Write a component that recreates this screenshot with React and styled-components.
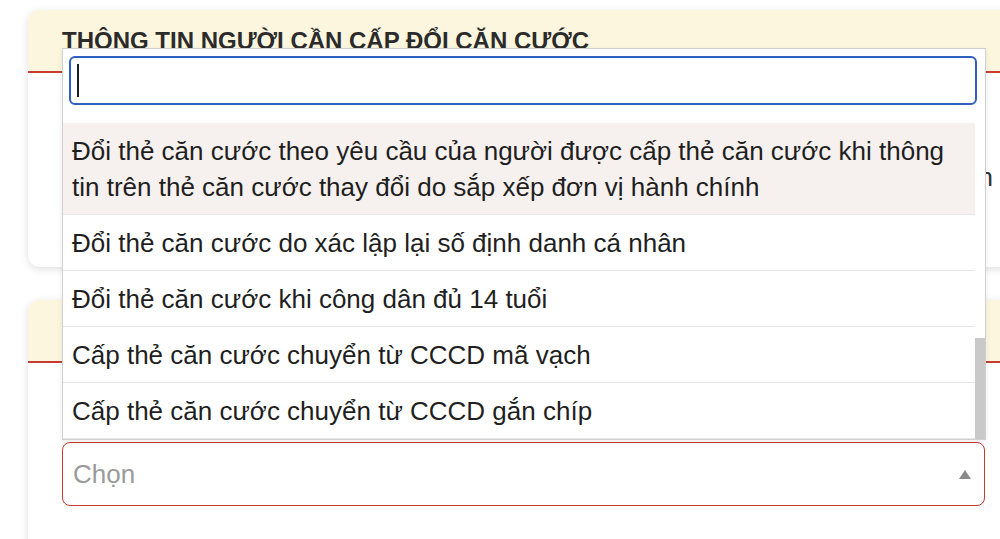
import React, { useLayoutEffect, useRef, useState } from "react";
import styled, { createGlobalStyle } from "styled-components";

const GlobalStyle = createGlobalStyle`
  html, body {
    margin: 0;
    padding: 0;
    overflow: hidden;
    background: #ffffff;
    font-family: "Liberation Sans", Arial, "Noto Sans", sans-serif;
    color: #222222;
  }
`;

const Page = styled.div`
  display: flex;
  flex-direction: column;
  gap: 33px;
  padding: 10px 0 0 28px;
  width: 991px;
`;

const Card = styled.section`
  background: #ffffff;
  border-radius: 12px;
  box-shadow: 0 2px 8px rgba(0, 0, 0, 0.13);
`;

const CardHeader = styled.div`
  background: #fdf6df;
  border-radius: 12px 12px 0 0;
  border-bottom: 2px solid #c8392e;
  padding: 17px 34px 16px;
`;

const CardTitle = styled.h2`
  margin: 0;
  font-size: 24px;
  line-height: 28px;
  font-weight: 700;
  text-transform: uppercase;
  color: #2b2b2b;
  white-space: nowrap;
`;

const CardBody = styled.div`
  display: flex;
  flex-direction: column;
  gap: 14px;
  height: ${(p) => p.$height}px;
  padding: ${(p) => p.$padTop}px 26px 0 34px;
  box-sizing: border-box;
`;

const FieldLabel = styled.label`
  font-size: 22px;
  line-height: 32px;
  color: #333333;
`;

const ValueRow = styled.div`
  display: flex;
  justify-content: space-between;
  font-size: 26px;
  line-height: 36px;
  color: #333333;
`;

const SelectWrap = styled.div`
  position: relative;
  width: 923px;
`;

const SelectBox = styled.div`
  display: flex;
  align-items: center;
  justify-content: space-between;
  height: 64px;
  box-sizing: border-box;
  padding: 0 13px 0 10px;
  border: 1.5px solid #c8392e;
  border-radius: 8px;
  background: #ffffff;
`;

const Placeholder = styled.span`
  font-size: 26px;
  color: #9a9a9a;
`;

const Arrow = styled.span`
  width: 0;
  height: 0;
  border-left: 6px solid transparent;
  border-right: 6px solid transparent;
  border-bottom: 9px solid #8a8a8a;
`;

const Dropdown = styled.div`
  position: absolute;
  left: 0;
  right: -1px;
  bottom: calc(100% + 2px);
  display: flex;
  flex-direction: column;
  background: #ffffff;
  border: 1px solid #cfcfcf;
  box-shadow: 0 2px 6px rgba(0, 0, 0, 0.08);
  z-index: 10;
`;

const SearchArea = styled.div`
  position: relative;
  padding: 7px 8px 18px 6px;
`;

const SearchInput = styled.input`
  display: block;
  width: 100%;
  height: 49px;
  box-sizing: border-box;
  border: 2px solid #2f5fc0;
  border-radius: 6px;
  padding: 0 6px;
  font-family: inherit;
  font-size: 26px;
  color: #222222;
  outline: none;
`;

const Caret = styled.span`
  position: absolute;
  left: 14px;
  top: 15px;
  width: 2px;
  height: 33px;
  background: #1e1e1e;
`;

const ListFrame = styled.div`
  display: flex;
  height: 316px;
`;

const OptionList = styled.ul`
  flex: 1;
  list-style: none;
  margin: 0;
  padding: 0;
  overflow-y: auto;
  scrollbar-width: none;

  &::-webkit-scrollbar {
    display: none;
  }
`;

const ScrollTrack = styled.div`
  position: relative;
  width: 10px;
  background: #ffffff;
`;

const ScrollThumb = styled.div`
  position: absolute;
  left: 0;
  right: 0;
  background: #c9c9c9;
`;

const Option = styled.li`
  padding: 10px 12px 9px 9px;
  font-size: 26px;
  line-height: 36px;
  color: #1f1f1f;
  border-bottom: 1px solid #e6e6e6;
  background: ${(p) => (p.$active ? "#f6f1ee" : "#ffffff")};
`;

const options = [
  "Cấp thẻ căn cước cho người từ đủ 14 tuổi trở lên",
  "Cấp thẻ căn cước cho người dưới 14 tuổi",
  "Đổi thẻ căn cước khi công dân đủ 25 tuổi",
  "Đổi thẻ căn cước khi công dân đủ 40 tuổi",
  "Đổi thẻ căn cước khi công dân đủ 60 tuổi",
  "Đổi thẻ căn cước do bị hư hỏng không sử dụng được",
  "Đổi thẻ căn cước do thay đổi thông tin nhân thân",
  "Đổi thẻ căn cước do thay đổi nhân dạng",
  "Đổi thẻ căn cước do có sai sót về thông tin",
  "Đổi thẻ căn cước do xác định lại giới tính",
  "Cấp lại thẻ căn cước do bị mất",
  "Cấp lại thẻ căn cước do trở lại quốc tịch",
  "Đổi thẻ căn cước theo yêu cầu của người được cấp thẻ căn cước khi thông tin trên thẻ căn cước thay đổi do sắp xếp đơn vị hành chính",
  "Đổi thẻ căn cước do xác lập lại số định danh cá nhân",
  "Đổi thẻ căn cước khi công dân đủ 14 tuổi",
  "Cấp thẻ căn cước chuyển từ CCCD mã vạch",
  "Cấp thẻ căn cước chuyển từ CCCD gắn chíp",
];

const activeIndex = 12;

export default function App() {
  const listRef = useRef(null);
  const [thumb, setThumb] = useState({ top: 216, height: 100 });

  useLayoutEffect(() => {
    const el = listRef.current;
    if (!el) return;
    el.scrollTop = el.scrollHeight;
    const ratio = el.clientHeight / el.scrollHeight;
    setThumb({
      top: el.scrollTop * ratio,
      height: el.clientHeight * ratio,
    });
  }, []);

  return (
    <>
      <GlobalStyle />
      <Page>
        <Card>
          <CardHeader>
            <CardTitle>Thông tin người cần cấp đổi căn cước</CardTitle>
          </CardHeader>
          <CardBody $height={194} $padTop={86}>
            <ValueRow>
              <span>Họ, chữ đệm và tên</span>
              <span>Nguyễn Văn An</span>
            </ValueRow>
          </CardBody>
        </Card>

        <Card>
          <CardHeader>
            <CardTitle>Thông tin đề nghị cấp đổi</CardTitle>
          </CardHeader>
          <CardBody $height={240} $padTop={33}>
            <FieldLabel>Loại cấp đổi</FieldLabel>
            <SelectWrap>
              <Dropdown>
                <SearchArea>
                  <SearchInput type="text" aria-label="Tìm kiếm" />
                  <Caret />
                </SearchArea>
                <ListFrame>
                  <OptionList ref={listRef}>
                    {options.map((o, i) => (
                      <Option key={o} $active={i === activeIndex}>
                        {o}
                      </Option>
                    ))}
                  </OptionList>
                  <ScrollTrack>
                    <ScrollThumb
                      style={{ top: thumb.top, height: thumb.height }}
                    />
                  </ScrollTrack>
                </ListFrame>
              </Dropdown>
              <SelectBox>
                <Placeholder>Chọn</Placeholder>
                <Arrow />
              </SelectBox>
            </SelectWrap>
          </CardBody>
        </Card>
      </Page>
    </>
  );
}
